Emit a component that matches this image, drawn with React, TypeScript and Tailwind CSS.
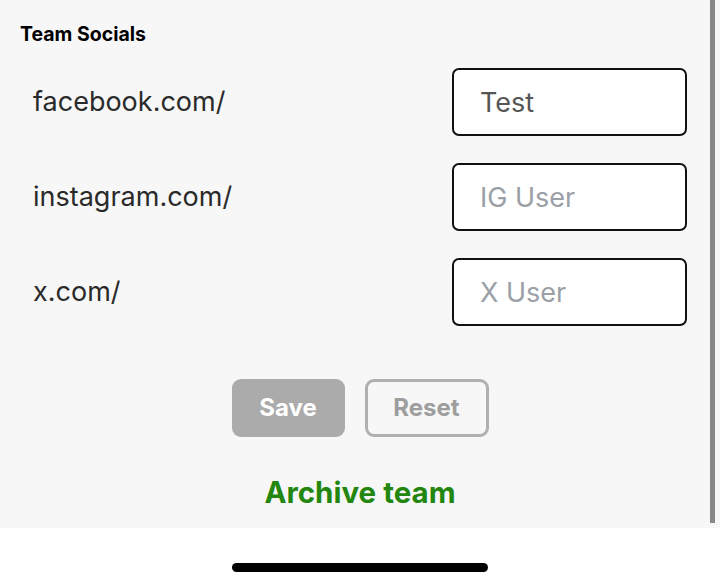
const socials = [
  { prefix: "facebook.com/", value: "Test", placeholder: "FB User" },
  { prefix: "instagram.com/", value: "", placeholder: "IG User" },
  { prefix: "x.com/", value: "", placeholder: "X User" },
];

export default function App() {
  return (
    <div className="flex h-[585px] w-[720px] flex-col bg-white font-['Inter',sans-serif]">
      <div className="relative h-[528px] bg-[#f7f7f7]">
        <div className="px-5 pt-[22px]">
          <h2 className="text-[19.5px] leading-6 font-bold text-black">Team Socials</h2>

          <div className="mt-[22px] flex flex-col gap-[27px] pr-[13px]">
            {socials.map((s) => (
              <div key={s.prefix} className="flex h-[68px] items-center justify-between">
                <span className="pl-[13px] text-[27px] text-[#2a2a2a]">{s.prefix}</span>
                <input
                  defaultValue={s.value}
                  placeholder={s.placeholder}
                  className="h-[68px] w-[235px] rounded-[7px] border-2 border-[#111] bg-white px-[26px] text-[27px] text-[#555] outline-none placeholder:text-[#9aa0a6]"
                />
              </div>
            ))}
          </div>
        </div>

        <div className="mt-[53px] flex justify-center gap-5">
          <button className="h-[58px] w-[113px] rounded-[9px] bg-[#ababab] text-[24px] font-bold text-white">
            Save
          </button>
          <button className="h-[58px] w-[124px] rounded-[9px] border-[3px] border-[#b0b0b0] text-[24px] font-bold text-[#9e9e9e]">
            Reset
          </button>
        </div>

        <div className="mt-[37px] text-center text-[29.5px] leading-9 font-bold text-[#23870f]">
          Archive team
        </div>

        <div className="absolute top-0 right-[5px] h-[523px] w-[5px] bg-[#888]" />
      </div>

      <div className="flex flex-1 items-center justify-center pt-[22px]">
        <div className="h-[9px] w-[256px] rounded-full bg-black" />
      </div>
    </div>
  );
}
